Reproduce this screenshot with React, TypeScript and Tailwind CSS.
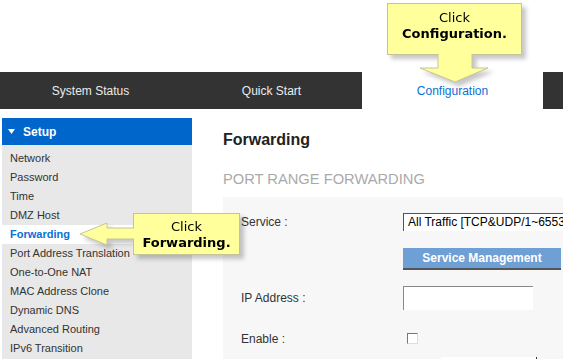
const MENU = [
  "Network",
  "Password",
  "Time",
  "DMZ Host",
  "Forwarding",
  "Port Address Translation",
  "One-to-One NAT",
  "MAC Address Clone",
  "Dynamic DNS",
  "Advanced Routing",
  "IPv6 Transition",
];

const TABS = ["System Status", "Quick Start", "Configuration"];

export default function App() {
  return (
    <div className="relative h-[359px] w-[563px] overflow-hidden bg-white font-['Liberation_Sans',Arial,sans-serif] text-[12px] text-[#333]">
      <div className="h-[72px]" />

      <nav className="flex h-[37px] bg-[#333333]">
        {TABS.map((t) => (
          <div
            key={t}
            className={`flex w-[181px] shrink-0 items-center justify-center ${
              t === "Configuration" ? "bg-white text-[#0a6fd6]" : "text-[#ececec]"
            }`}
          >
            {t}
          </div>
        ))}
      </nav>

      <div className="flex">
        <aside className="ml-[2px] mt-[9px] h-[241px] w-[190px] shrink-0 bg-[#e8e8e8]">
          <div className="flex h-[27px] items-center gap-[8px] bg-[#0066cc] pl-[6px] font-bold text-white">
            <svg width="7" height="5" viewBox="0 0 7 5">
              <path d="M0 0H7L3.5 5Z" fill="white" />
            </svg>
            Setup
          </div>
          <ul className="pt-[4px] text-[11px]">
            {MENU.map((m) => (
              <li
                key={m}
                className={`h-[19px] pl-[8px] leading-[19px] ${
                  m === "Forwarding" ? "bg-white font-bold text-[#0a6fd6]" : ""
                }`}
              >
                {m}
              </li>
            ))}
          </ul>
        </aside>

        <main className="ml-[31px] flex h-[250px] min-w-0 flex-1 flex-col overflow-hidden pt-[21px]">
          <h1 className="text-[16px] font-bold leading-[20px] text-[#222]">Forwarding</h1>
          <h2 className="mt-[20px] whitespace-nowrap text-[14.7px] leading-[18px] text-[#aaaaaa]">
            PORT RANGE FORWARDING
          </h2>

          <div className="mt-[9px] flex-1 bg-[#f7f7f7] pt-[16px]">
            <div className="flex h-[18px] items-center">
              <span className="w-[180px] shrink-0 pl-[18px]">Service :</span>
              <div className="h-[18px] w-[200px] shrink-0 whitespace-nowrap border-l border-t border-[#555] bg-white pl-[4px] leading-[17px] text-black">
                All Traffic [TCP&amp;UDP/1~65535]
              </div>
            </div>

            <div className="ml-[180px] mt-[17px] flex h-[22px] w-[158px] items-center justify-center border-b-2 border-[#555] bg-[#6ea0d6] font-bold text-white">
              Service Management
            </div>

            <div className="mt-[16px] flex h-[24px] items-center">
              <span className="w-[180px] shrink-0 pl-[18px]">IP Address :</span>
              <div className="h-[24px] w-[130px] shrink-0 border-l border-t border-[#888] bg-white" />
            </div>

            <div className="mt-[23px] flex h-[11px] items-center">
              <span className="w-[184px] shrink-0 pl-[18px]">Enable :</span>
              <div className="h-[11px] w-[11px] shrink-0 border border-b-[#ddd] border-l-[#777] border-r-[#ddd] border-t-[#777] bg-white" />
            </div>

            <div className="ml-[218px] mt-[13px] h-[2px] w-[96px] border-r border-[#333] bg-white" />
          </div>
        </main>
      </div>

      {/* callout: Configuration */}
      <div className="absolute left-[387px] top-[3px] drop-shadow-[4px_4px_2px_rgba(0,0,0,0.22)]">
        <div className="h-[52px] w-[135px] border border-[#c4c49a] bg-[#ffff9c] pt-[6px] text-center font-['DejaVu_Sans',sans-serif] text-[13px] leading-[16px] text-black">
          <div>Click</div>
          <div className="font-bold">Configuration.</div>
        </div>
        <svg className="absolute left-[31px] top-[51px]" width="72" height="32" viewBox="0 0 72 32">
          <path
            d="M20 0 L20 14 L2 14 L37 28 L70 14 L54 14 L54 0"
            fill="#ffff9c"
            stroke="#c4c49a"
            strokeWidth="1"
          />
        </svg>
      </div>

      {/* callout: Forwarding */}
      <div className="absolute left-[79px] top-[213px] drop-shadow-[4px_4px_2px_rgba(0,0,0,0.22)]">
        <div className="ml-[54px] h-[42px] w-[107px] border border-[#c4c49a] bg-[#ffff9c] pt-[5px] text-center font-['DejaVu_Sans',sans-serif] text-[13px] leading-[16px] text-black">
          <div>Click</div>
          <div className="font-bold">Forwarding.</div>
        </div>
        <svg className="absolute left-0 top-[9px]" width="56" height="25" viewBox="0 0 56 25">
          <path
            d="M55 6 L28 6 L28 1 L1 12 L28 23 L28 17 L55 17"
            fill="#ffff9c"
            stroke="#c4c49a"
            strokeWidth="1"
          />
        </svg>
      </div>
    </div>
  );
}
